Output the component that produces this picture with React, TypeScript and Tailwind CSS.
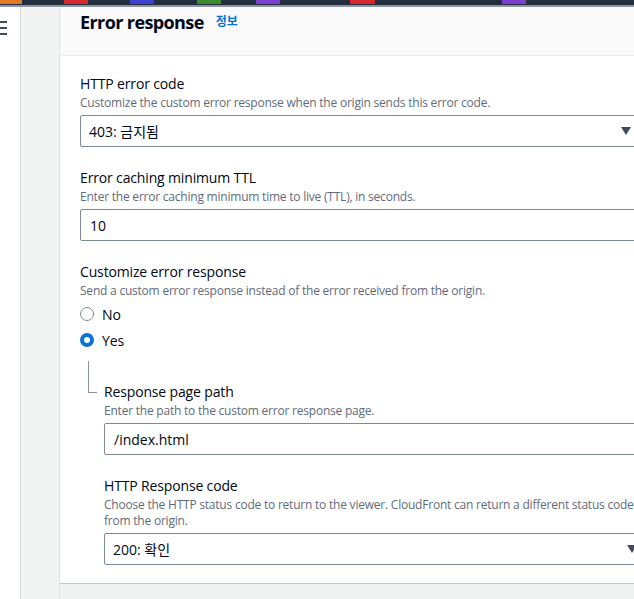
import React from 'react';

const font = { fontFamily: '"Open Sans", "Noto Sans CJK KR", sans-serif' };

function Caret() {
  return (
    <svg width="10" height="8" viewBox="0 0 10 8" className="shrink-0">
      <path d="M0 0h10L5 8z" fill="#414d5c" />
    </svg>
  );
}

function Field({ label, desc, children }: { label: string; desc: React.ReactNode; children: React.ReactNode }) {
  return (
    <div className="flex flex-col">
      <div className="text-[14px] leading-[22px] tracking-[-0.15px] text-[#000716]">{label}</div>
      <div className="whitespace-nowrap text-[12px] leading-4 tracking-[-0.22px] text-[#5f6b7a]">{desc}</div>
      <div className="mt-1">{children}</div>
    </div>
  );
}

function Radio({ checked, label }: { checked?: boolean; label: string }) {
  return (
    <div className="flex h-5 items-center gap-2">
      {checked ? (
        <span className="h-[14px] w-[14px] rounded-full border-[4px] border-[#0972d3] bg-white" />
      ) : (
        <span className="h-[14px] w-[14px] rounded-full border-[1.5px] border-[#7d8998] bg-white" />
      )}
      <span className="text-[14px] tracking-[-0.15px] text-[#000716]">{label}</span>
    </div>
  );
}

export default function App() {
  const tabs = [
    { ml: 'ml-0', w: 'w-[22px]', c: 'bg-[#e07b24]' },
    { ml: 'ml-[42px]', w: 'w-[24px]', c: 'bg-[#d8282f]' },
    { ml: 'ml-[42px]', w: 'w-[24px]', c: 'bg-[#3d43cf]' },
    { ml: 'ml-[43px]', w: 'w-[24px]', c: 'bg-[#3f8a2c]' },
    { ml: 'ml-[35px]', w: 'w-[24px]', c: 'bg-[#7c3fcf]' },
    { ml: 'ml-[70px]', w: 'w-[25px]', c: 'bg-[#d8282f]' },
    { ml: 'ml-[127px]', w: 'w-[24px]', c: 'bg-[#7c3fcf]' },
  ];

  return (
    <div style={font} className="flex h-[599px] w-[634px] flex-col overflow-hidden bg-white">
      <div className="flex h-[5px] shrink-0 items-start bg-[#232f3e]">
        {tabs.map((t, i) => (
          <div key={i} className={`${t.ml} ${t.w} ${t.c} h-[4px]`} />
        ))}
      </div>
      <div className="h-[2px] shrink-0 bg-[#8d96a0]" />

      <div className="flex min-h-0 flex-1">
        {/* nav toggle */}
        <div className="w-[20px] shrink-0 bg-white pt-[14px]">
          <div className="flex w-[7px] flex-col gap-[4px]">
            <div className="h-[2px] bg-[#414d5c]" />
            <div className="h-[2px] bg-[#414d5c]" />
            <div className="h-[2px] bg-[#414d5c]" />
          </div>
        </div>
        <div className="w-[40px] shrink-0 border-l border-r border-l-[#d5dbdb] border-r-[#dfe3e3] bg-[#f2f3f3]" />

        <div className="flex min-w-0 flex-1 flex-col bg-[#f0f1f1]">
          <div className="flex flex-col border-b border-[#c6c6cd] bg-white">
            <div className="flex h-[49px] items-start gap-3 border-b border-[#e9ebed] bg-[#fafafa] pl-[20px] pt-[3px]">
              <span className="text-[18px] font-bold leading-[24px] tracking-[-0.6px] text-[#000716]">Error response</span>
              <span className="mt-[4px] text-[12px] font-bold leading-4 text-[#0972d3]">정보</span>
            </div>

            <div className="flex flex-col pb-[18px] pl-[20px] pt-[17px]">
              <Field label="HTTP error code" desc="Customize the custom error response when the origin sends this error code.">
                <div className="flex h-[32px] w-[564px] items-center justify-between rounded-[2px] border border-[#7d8998] pl-2 pr-3">
                  <span className="text-[14px] text-[#000716]">403: 금지됨</span>
                  <Caret />
                </div>
              </Field>

              <div className="mt-[20px]">
                <Field label="Error caching minimum TTL" desc="Enter the error caching minimum time to live (TTL), in seconds.">
                  <div className="flex h-[32px] w-[564px] items-center rounded-[2px] border border-[#7d8998] pl-[9px]">
                    <span className="text-[14px] text-[#000716]">10</span>
                  </div>
                </Field>
              </div>

              <div className="mt-[20px] flex flex-col">
                <div className="text-[14px] leading-[22px] tracking-[-0.15px] text-[#000716]">Customize error response</div>
                <div className="text-[12px] leading-4 tracking-[-0.22px] text-[#5f6b7a]">Send a custom error response instead of the error received from the origin.</div>
                <div className="mt-[5px] flex flex-col gap-[6px]">
                  <Radio label="No" />
                  <Radio checked label="Yes" />
                </div>
              </div>

              <div className="mt-[11px] flex">
                <div className="ml-[8px] mr-[7px] h-[32px] w-[9px] shrink-0 border-b border-l border-[#8d96a0]" />
                <div className="mt-[20px] flex flex-col">
                  <Field label="Response page path" desc="Enter the path to the custom error response page.">
                    <div className="flex h-[32px] w-[546px] items-center rounded-[2px] border border-[#7d8998] pl-[9px]">
                      <span className="text-[14px] text-[#000716]">/index.html</span>
                    </div>
                  </Field>

                  <div className="mt-[20px]">
                    <Field
                      label="HTTP Response code"
                      desc={
                        <>
                          Choose the HTTP status code to return to the viewer. CloudFront can return a different status code
                          <br />
                          from the origin.
                        </>
                      }
                    >
                      <div className="flex h-[32px] w-[546px] items-center justify-between rounded-[2px] border border-[#7d8998] pl-2 pr-3">
                        <span className="text-[14px] text-[#000716]">200: 확인</span>
                        <Caret />
                      </div>
                    </Field>
                  </div>
                </div>
              </div>
            </div>
          </div>
        </div>
      </div>
    </div>
  );
}
